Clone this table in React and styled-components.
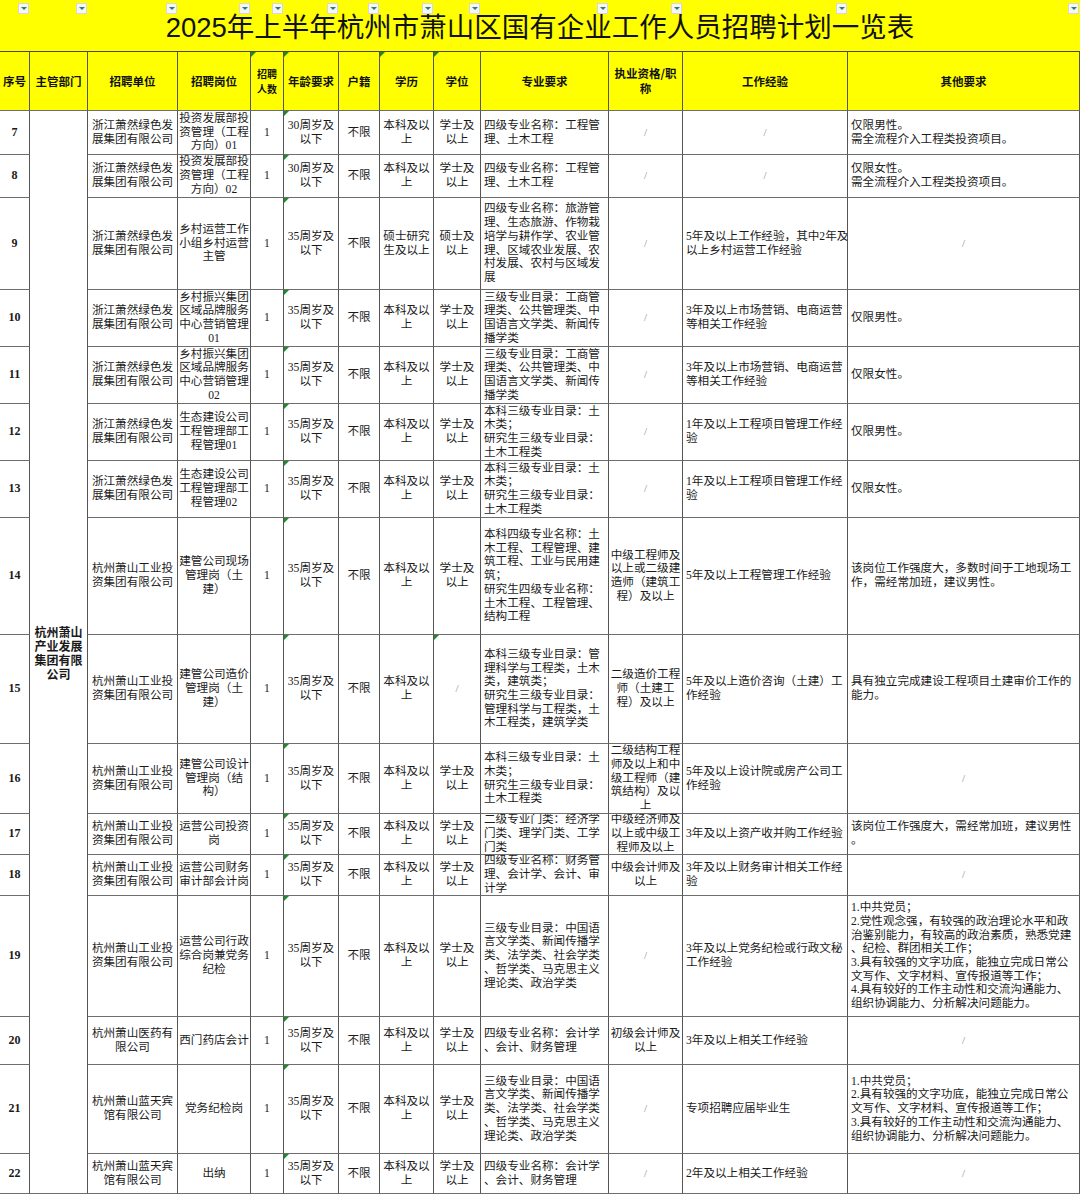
import React from 'react';
import styled, { createGlobalStyle } from 'styled-components';

const GlobalStyle = createGlobalStyle`
  html, body {
    margin: 0;
    padding: 0;
    background: #fff;
  }
  body {
    font-family: "Liberation Serif", "Noto Sans CJK SC", serif;
    color: #1a1a1a;
  }
`;

const COLS = [30, 58, 90, 73, 33, 55, 41, 54, 47, 128, 74, 165, 232];
const template = COLS.map(w => `${w}px`).join(' ');
const ROW_HEIGHTS = [59, 44, 43, 92, 57, 57, 57, 57, 117, 109, 70, 41, 41, 121, 48, 89, 40];

const Sheet = styled.div`
  width: 1080px;
`;

const TitleBar = styled.div`
  position: relative;
  height: 52px;
  box-sizing: border-box;
  background: #ffff00;
  border-bottom: 1px solid #4a4a30;
  display: flex;
  align-items: center;
  justify-content: center;
  padding-top: 4px;
`;

const Title = styled.h1`
  margin: 0;
  font-family: "Liberation Sans", "Noto Sans CJK SC", sans-serif;
  font-weight: 400;
  font-size: 27.5px;
  line-height: 32px;
  color: #111;
`;

const FilterRow = styled.div`
  position: absolute;
  top: 3px;
  left: 0;
  right: 0;
  display: grid;
  grid-template-columns: ${template};
`;

const FilterButton = styled.span`
  justify-self: end;
  margin-right: 1px;
  width: 11px;
  height: 11px;
  box-sizing: border-box;
  background: #f6f6f6;
  border: 1px solid #d8d8d8;
  display: flex;
  justify-content: center;
  padding-top: 3px;

  &::after {
    content: '';
    height: 0;
    border-left: 3px solid transparent;
    border-right: 3px solid transparent;
    border-top: 3px solid #2d7d70;
  }
`;

const Grid = styled.div`
  display: grid;
  grid-template-columns: ${template};
  grid-template-rows: ${ROW_HEIGHTS.map(h => `${h}px`).join(' ')};
`;

const Cell = styled.div`
  position: relative;
  box-sizing: border-box;
  border-right: 1px solid #555;
  border-bottom: 1px solid #6e6e6e;
  overflow: hidden;
  display: flex;
  align-items: center;
  justify-content: ${p => (p.$left ? 'flex-start' : 'center')};
  text-align: ${p => (p.$left ? 'left' : 'center')};
  padding: 0 ${p => (p.$left ? '3px' : '1px')};
  white-space: pre;
  font-size: 11.6px;
  line-height: 13.7px;
`;

const HeaderCell = styled(Cell)`
  background: #ffff00;
  font-family: "Noto Sans CJK SC", sans-serif;
  font-weight: 700;
  font-size: ${p => (p.$small ? '10px' : '11.5px')};
  line-height: 15px;
  color: #111;
`;

const NumberCell = styled(Cell)`
  font-weight: 700;
  font-size: 12px;
`;

const DeptCell = styled(Cell)`
  grid-column: 2;
  grid-row: 2 / span 16;
  font-family: "Noto Sans CJK SC", sans-serif;
  font-weight: 700;
  font-size: 12px;
  line-height: 14px;
  padding-top: 2px;
`;

const Slash = styled.span`
  color: #8c8c8c;
  font-size: 11px;
`;

const Marker = styled.i`
  position: absolute;
  top: 0;
  left: 0;
  width: 0;
  height: 0;
  border-top: 5px solid #1f8a2a;
  border-right: 5px solid transparent;
`;

const HEADERS = [
  { t: '序号' },
  { t: '主管部门' },
  { t: '招聘单位' },
  { t: '招聘岗位' },
  { t: '招聘\n人数', small: true, mark: true },
  { t: '年龄要求', mark: true },
  { t: '户籍' },
  { t: '学历', mark: true },
  { t: '学位', mark: true },
  { t: '专业要求' },
  { t: '执业资格/职\n称' },
  { t: '工作经验' },
  { t: '其他要求' },
];

const GREEN = '浙江萧然绿色发\n展集团有限公司';
const INDUSTRY = '杭州萧山工业投\n资集团有限公司';
const HOTEL = '杭州萧山蓝天宾\n馆有限公司';
const AGE30 = '30周岁及\n以下';
const AGE35 = '35周岁及\n以下';
const BK = '本科及以\n上';
const XS = '学士及\n以上';
const POLITICS = '三级专业目录：中国语\n言文学类、新闻传播学\n类、法学类、社会学类\n、哲学类、马克思主义\n理论类、政治学类';
const CIVIL = '本科三级专业目录：土\n木类；\n研究生三级专业目录：\n土木工程类';
const ACCOUNT = '四级专业名称：会计学\n、会计、财务管理';
const MARKET = '三级专业目录：工商管\n理类、公共管理类、中\n国语言文学类、新闻传\n播学类';

const ROWS = [
  {
    no: 7, unit: GREEN, post: '投资发展部投\n资管理（工程\n方向）01', age: AGE30, edu: BK, degree: XS,
    major: '四级专业名称：工程管\n理、土木工程', cert: '/', exp: '/',
    other: '仅限男性。\n需全流程介入工程类投资项目。',
  },
  {
    no: 8, unit: GREEN, post: '投资发展部投\n资管理（工程\n方向）02', age: AGE30, edu: BK, degree: XS,
    major: '四级专业名称：工程管\n理、土木工程', cert: '/', exp: '/',
    other: '仅限女性。\n需全流程介入工程类投资项目。',
  },
  {
    no: 9, unit: GREEN, post: '乡村运营工作\n小组乡村运营\n主管', age: AGE35, edu: '硕士研究\n生及以上', degree: '硕士及\n以上',
    major: '四级专业名称：旅游管\n理、生态旅游、作物栽\n培学与耕作学、农业管\n理、区域农业发展、农\n村发展、农村与区域发\n展',
    cert: '/', exp: '5年及以上工作经验，其中2年及\n以上乡村运营工作经验', other: '/',
  },
  {
    no: 10, unit: GREEN, post: '乡村振兴集团\n区域品牌服务\n中心营销管理\n01', age: AGE35, edu: BK, degree: XS,
    major: MARKET, cert: '/', exp: '3年及以上市场营销、电商运营\n等相关工作经验', other: '仅限男性。',
  },
  {
    no: 11, unit: GREEN, post: '乡村振兴集团\n区域品牌服务\n中心营销管理\n02', age: AGE35, edu: BK, degree: XS,
    major: MARKET, cert: '/', exp: '3年及以上市场营销、电商运营\n等相关工作经验', other: '仅限女性。',
  },
  {
    no: 12, unit: GREEN, post: '生态建设公司\n工程管理部工\n程管理01', age: AGE35, edu: BK, degree: XS,
    major: CIVIL, cert: '/', exp: '1年及以上工程项目管理工作经\n验', other: '仅限男性。',
  },
  {
    no: 13, unit: GREEN, post: '生态建设公司\n工程管理部工\n程管理02', age: AGE35, edu: BK, degree: XS,
    major: CIVIL, cert: '/', exp: '1年及以上工程项目管理工作经\n验', other: '仅限女性。',
  },
  {
    no: 14, unit: INDUSTRY, post: '建管公司现场\n管理岗（土\n建）', age: AGE35, edu: BK, degree: XS,
    major: '本科四级专业名称：土\n木工程、工程管理、建\n筑工程、工业与民用建\n筑；\n研究生四级专业名称：\n土木工程、工程管理、\n结构工程',
    cert: '中级工程师及\n以上或二级建\n造师（建筑工\n程）及以上', exp: '5年及以上工程管理工作经验',
    other: '该岗位工作强度大，多数时间于工地现场工\n作，需经常加班，建议男性。',
  },
  {
    no: 15, unit: INDUSTRY, post: '建管公司造价\n管理岗（土\n建）', age: AGE35, edu: BK, degree: '/', degreeMark: true,
    major: '本科三级专业目录：管\n理科学与工程类，土木\n类，建筑类；\n研究生三级专业目录：\n管理科学与工程类，土\n木工程类，建筑学类',
    cert: '二级造价工程\n师（土建工\n程）及以上', exp: '5年及以上造价咨询（土建）工\n作经验',
    other: '具有独立完成建设工程项目土建审价工作的\n能力。',
  },
  {
    no: 16, unit: INDUSTRY, post: '建管公司设计\n管理岗（结\n构）', age: AGE35, edu: BK, degree: XS,
    major: CIVIL, cert: '二级结构工程\n师及以上和中\n级工程师（建\n筑结构）及以\n上',
    exp: '5年及以上设计院或房产公司工\n作经验', other: '/',
  },
  {
    no: 17, unit: INDUSTRY, post: '运营公司投资\n岗', age: AGE35, edu: BK, degree: XS,
    major: '二级专业门类：经济学\n门类、理学门类、工学\n门类', cert: '中级经济师及\n以上或中级工\n程师及以上',
    exp: '3年及以上资产收并购工作经验', other: '该岗位工作强度大，需经常加班，建议男性\n。',
  },
  {
    no: 18, unit: INDUSTRY, post: '运营公司财务\n审计部会计岗', age: AGE35, edu: BK, degree: XS,
    major: '四级专业名称：财务管\n理、会计学、会计、审\n计学', cert: '中级会计师及\n以上',
    exp: '3年及以上财务审计相关工作经\n验', other: '/',
  },
  {
    no: 19, unit: INDUSTRY, post: '运营公司行政\n综合岗兼党务\n纪检', age: AGE35, edu: BK, degree: XS,
    major: POLITICS, cert: '/', exp: '3年及以上党务纪检或行政文秘\n工作经验',
    other: '1.中共党员；\n2.党性观念强，有较强的政治理论水平和政\n治鉴别能力，有较高的政治素质，熟悉党建\n、纪检、群团相关工作；\n3.具有较强的文字功底，能独立完成日常公\n文写作、文字材料、宣传报道等工作；\n4.具有较好的工作主动性和交流沟通能力、\n组织协调能力、分析解决问题能力。',
  },
  {
    no: 20, unit: '杭州萧山医药有\n限公司', post: '西门药店会计', age: AGE35, edu: BK, degree: XS,
    major: ACCOUNT, cert: '初级会计师及\n以上', exp: '3年及以上相关工作经验', other: '/',
  },
  {
    no: 21, unit: HOTEL, post: '党务纪检岗', age: AGE35, edu: BK, degree: XS,
    major: POLITICS, cert: '/', exp: '专项招聘应届毕业生',
    other: '1.中共党员；\n2.具有较强的文字功底，能独立完成日常公\n文写作、文字材料、宣传报道等工作；\n3.具有较好的工作主动性和交流沟通能力、\n组织协调能力、分析解决问题能力。',
  },
  {
    no: 22, unit: HOTEL, post: '出纳', age: AGE35, edu: BK, degree: XS,
    major: ACCOUNT, cert: '/', exp: '2年及以上相关工作经验', other: '/',
  },
];

// a "/" cell is always centred, whatever the column alignment
const Value = ({ text, left, mark }) => {
  const isSlash = text === '/';
  return (
    <Cell $left={left && !isSlash}>
      {mark && <Marker />}
      {isSlash ? <Slash>/</Slash> : text}
    </Cell>
  );
};

const Row = ({ row }) => (
  <>
    <NumberCell>{row.no}</NumberCell>
    <Value text={row.unit} />
    <Value text={row.post} />
    <Value text="1" />
    <Value text={row.age} mark />
    <Value text="不限" />
    <Value text={row.edu} />
    <Value text={row.degree} mark={row.degreeMark} />
    <Value text={row.major} left />
    <Value text={row.cert} />
    <Value text={row.exp} left />
    <Value text={row.other} left />
  </>
);

export default function App() {
  return (
    <Sheet>
      <GlobalStyle />
      <TitleBar>
        <FilterRow>
          {COLS.map((w, i) => (
            <FilterButton key={i} />
          ))}
        </FilterRow>
        <Title>2025年上半年杭州市萧山区国有企业工作人员招聘计划一览表</Title>
      </TitleBar>
      <Grid>
        {HEADERS.map((h, i) => (
          <HeaderCell key={i} $small={h.small}>
            {h.mark && <Marker />}
            {h.t}
          </HeaderCell>
        ))}
        <DeptCell>{'杭州萧山\n产业发展\n集团有限\n公司'}</DeptCell>
        {ROWS.map(row => (
          <Row key={row.no} row={row} />
        ))}
      </Grid>
    </Sheet>
  );
}
